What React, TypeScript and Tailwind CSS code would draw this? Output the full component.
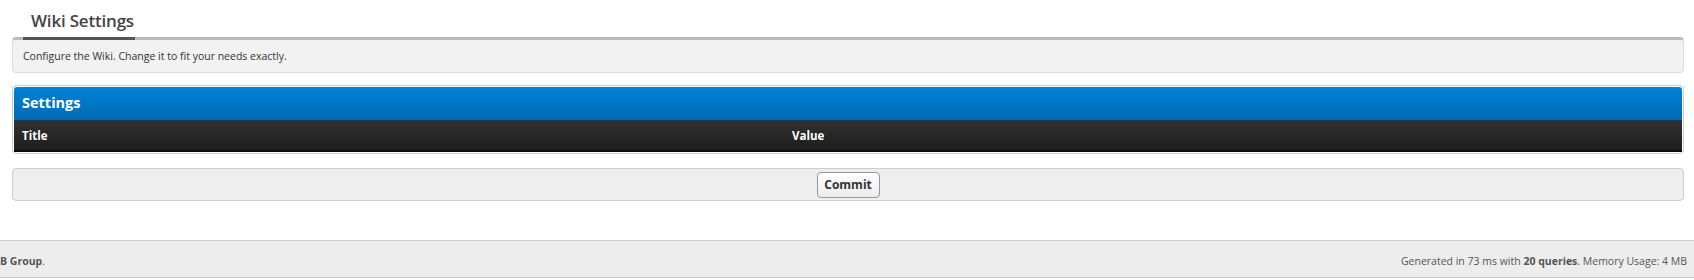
import React from "react";

export default function App() {
  return (
    <div className="w-[1694px] h-[280px] bg-white font-['Open_Sans',sans-serif] text-[#333] overflow-hidden">
      <div className="pl-3 pr-[10px]">
        {/* Heading */}
        <div className="h-[37px] pl-[10px] flex items-end">
          <h1 className="px-[9px] pb-[8px] text-[17px] leading-none font-semibold text-[#444] tracking-[-0.2px]">
            Wiki Settings
          </h1>
        </div>

        {/* Description box */}
        <div className="relative h-[36px] rounded-[4px] border border-[#dcdcdc] border-t-[3px] border-t-[#bbbbbb] bg-[#f2f2f2] flex items-center pl-[10px]">
          <div className="absolute -top-[3px] left-[10px] w-[112px] h-[3px] bg-[#555555]" />
          <p className="text-[10.5px] text-[#333] leading-none">
            Configure the Wiki. Change it to fit your needs exactly.
          </p>
        </div>

        {/* Settings panel */}
        <div className="mt-[12px] rounded-[4px] border border-[#cccccc] p-[1px] bg-white">
          <div className="h-[33px] rounded-t-[3px] bg-gradient-to-b from-[#0082d6] to-[#006ab4] flex items-center pl-[8px]">
            <span className="text-white font-bold text-[14.5px] leading-none">Settings</span>
          </div>
          <div className="h-[32px] grid grid-cols-[770px_1fr] items-center border-t border-t-[#173c55] border-b-2 border-b-[#0a0a0a] bg-gradient-to-b from-[#313131] to-[#1e1e1e]">
            <span className="pl-[8px] text-white font-bold text-[11.5px] leading-none">Title</span>
            <span className="pl-[8px] text-white font-bold text-[11.5px] leading-none">Value</span>
          </div>
        </div>

        {/* Commit bar */}
        <div className="mt-[14px] h-[33px] rounded-[4px] border border-[#cccccc] bg-[#eeeeee] flex items-center justify-center">
          <button className="h-[26px] w-[63px] rounded-[4px] border border-[#999999] bg-gradient-to-b from-white to-[#ececec] text-[12px] font-bold text-[#333] leading-none">
            Commit
          </button>
        </div>
      </div>

      {/* Footer */}
      <div className="mt-[39px] h-[38px] border-y border-[#cccccc] bg-[#ededed] flex items-center justify-between pr-[7px] text-[10.5px] text-[#555] leading-none pt-[4px]">
        <span>
          <b className="font-bold">B Group</b>.
        </span>
        <span>
          Generated in 73 ms with <b className="font-bold">20 queries</b>. Memory Usage: 4 MB
        </span>
      </div>
    </div>
  );
}
